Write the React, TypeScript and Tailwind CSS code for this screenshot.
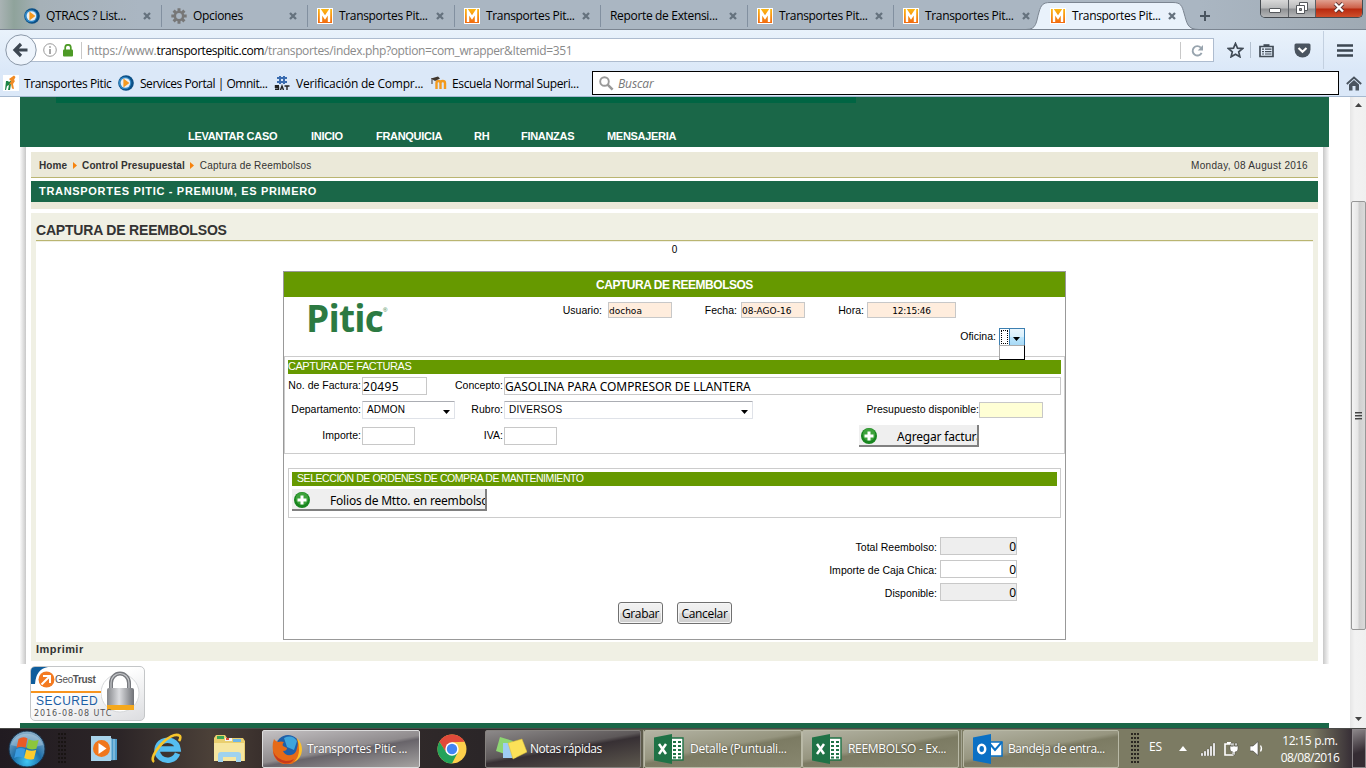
import React from "react";

const ui = "font-['Open_Sans','Noto_Sans',sans-serif]";

function QtracsIcon() {
  return (
    <svg width="16" height="16" viewBox="0 0 16 16" className="shrink-0">
      <circle cx="8" cy="8" r="7.8" fill="#0b4f86" />
      <circle cx="7" cy="8" r="6.3" fill="#2f86c4" />
      <circle cx="7.4" cy="8" r="4.8" fill="#e9f0f5" />
      <path d="M5.4 3.6 11.4 8l-6 4.4z" fill="#f59a1f" />
    </svg>
  );
}

function MIcon() {
  return (
    <svg width="16" height="16" viewBox="0 0 16 16" className="shrink-0">
      <defs>
        <linearGradient id="mg" x1="0" y1="0" x2="0" y2="1">
          <stop offset="0" stopColor="#fdb813" />
          <stop offset="1" stopColor="#f26a10" />
        </linearGradient>
      </defs>
      <rect width="16" height="16" fill="#fff" />
      <rect x="1" y="1" width="14" height="14" fill="url(#mg)" />
      <path d="M4 14V3.500l4 6 4-6V14" fill="none" stroke="#fff" strokeWidth="2.400" />
    </svg>
  );
}

function GearIcon() {
  return (
    <svg width="16" height="16" viewBox="0 0 16 16" className="shrink-0">
      <g stroke="#777" strokeWidth="3">
        <path d="M8 .3v15.4M.3 8h15.4M2.6 2.6l10.8 10.8M13.4 2.6 2.6 13.4" />
      </g>
      <circle cx="8" cy="8" r="5.3" fill="#777" />
      <circle cx="8" cy="8" r="2.9" fill="#aab6c2" />
    </svg>
  );
}

function CloseX() {
  return (
    <svg width="8" height="8" viewBox="0 0 8 8" className="shrink-0">
      <path d="M1 1l6 6M7 1 1 7" stroke="#65727e" strokeWidth="2.3" />
    </svg>
  );
}

type TabProps = { icon?: React.ReactNode; title: string; width: string; sep?: boolean; pad?: string };

function Tab({ icon, title, width, sep = true, pad = "pl-[9px]" }: TabProps) {
  return (
    <div className={`flex h-[29px] shrink-0 items-center pt-[2px] ${width}`}>
      <div className={`flex flex-1 items-center gap-[6px] ${pad}`}>
        {icon}
        <span className="whitespace-nowrap text-[12px] leading-4 tracking-[-0.33px]">{title}</span>
      </div>
      <CloseX />
      <div className={`ml-[10px] h-[22px] w-px ${sep ? "bg-[#8290a0]" : "bg-transparent"}`} />
    </div>
  );
}

function TabStrip() {
  return (
    <div className="relative flex h-[30px] items-start overflow-hidden border-b border-[#7b8591] bg-[linear-gradient(90deg,#a9b3b4_0px,#8fa39b_14px,#a6b1b8_40px,#aab6c2_140px,#aab6c2_1200px,#9faab4_1366px)] pl-[15px]">
      <Tab icon={<QtracsIcon />} title="QTRACS ? List..." width="w-[147px]" />
      <Tab icon={<GearIcon />} title="Opciones" width="w-[146px]" />
      <Tab icon={<MIcon />} title="Transportes Pit..." width="w-[147px]" />
      <Tab icon={<MIcon />} title="Transportes Pit..." width="w-[146px]" />
      <Tab title="Reporte de Extensi..." width="w-[147px]" />
      <Tab icon={<MIcon />} title="Transportes Pit..." width="w-[146px]" />
      <Tab icon={<MIcon />} title="Transportes Pit..." width="w-[147px]" sep={false} />
      <div className="relative flex w-[146px] shrink-0">
        <svg width="176" height="31" viewBox="0 0 176 31" className="absolute left-[-15px] top-0">
          <path d="M0 29.500C11 29.500 10 22 13 12 15 5 17 2.500 24 2.500H147C155 2.500 156 6 158 13 161 23 161 29.500 173 29.500Z" fill="#e9f2fb" stroke="#7b8591" strokeWidth="1" />
          <path d="M4 30H170" stroke="#e9f2fb" strokeWidth="2" />
        </svg>
        <div className="relative w-[146px]">
          <Tab icon={<MIcon />} title="Transportes Pit..." width="w-[146px]" sep={false} />
        </div>
      </div>
      <svg width="12" height="12" viewBox="0 0 12 12" className="ml-[12px] mt-[10px]">
        <path d="M6 1v10M1 6h10" stroke="#4a5560" strokeWidth="2" />
      </svg>
      <div className="absolute left-[1260px] top-0 flex h-[18px] w-[103px] overflow-hidden rounded-b-[5px] border border-t-0 border-[#454a50]">
        <div className="flex w-[28px] items-center justify-center border-r border-[#5b5f64] bg-[linear-gradient(180deg,#d8d8d8_0px,#b9babb_8px,#8f9194_9px,#b5b6b8_17px)]">
          <div className="mt-[3px] h-[5px] w-[12px] rounded-[1px] border border-[#55585c] bg-white" />
        </div>
        <div className="flex w-[27px] items-center justify-center border-r border-[#5b5f64] bg-[linear-gradient(180deg,#d8d8d8_0px,#b9babb_8px,#8f9194_9px,#b5b6b8_17px)]">
          <svg width="12" height="12" viewBox="0 0 12 12" className="mb-px">
            <path d="M3.500 .5h8v8h-8z" fill="#fff" stroke="#55585c" />
            <path d="M.5 3.500h8v8h-8z" fill="#fff" stroke="#55585c" />
            <path d="M3.500 6.500h2v2h-2z" fill="#999" stroke="#55585c" />
          </svg>
        </div>
        <div className="flex flex-1 items-center justify-center bg-[linear-gradient(180deg,#e0a090_0px,#cd5f48_8px,#b8290f_9px,#cf4f2c_17px)]">
          <svg width="12" height="11" viewBox="0 0 12 11" className="mb-[2px]">
            <path d="M2 1.500l8 8M10 1.500l-8 8" stroke="#5b3434" strokeWidth="4" />
            <path d="M2 1.500l8 8M10 1.500l-8 8" stroke="#fff" strokeWidth="2.400" />
          </svg>
        </div>
      </div>
    </div>
  );
}

function NavBar() {
  return (
    <div className="flex h-[40px] items-center bg-[linear-gradient(180deg,#e9f2fb,#dbe8f8)]">
      <div className="relative flex h-[32px] w-[1214px] items-center pl-[16px]">
        <div className="flex h-[24px] flex-1 items-center border border-[#aebccf] bg-white">
          <svg width="14" height="14" viewBox="0 0 14 14" className="ml-[26px]">
            <circle cx="7" cy="7" r="6.300" fill="none" stroke="#9a9a9a" />
            <path d="M7 3.200v1.500M7 6v5" stroke="#8a8a8a" strokeWidth="1.500" />
          </svg>
          <svg width="10" height="13" viewBox="0 0 10 13" className="ml-[6px]">
            <path d="M2.200 6V3.600a2.800 2.800 0 0 1 5.600 0V6" fill="none" stroke="#4d9a26" strokeWidth="1.700" />
            <rect y="5.500" width="10" height="7" rx="1" fill="#4d9a26" />
          </svg>
          <div className="ml-[8px] mr-[5px] h-[17px] w-px bg-[#c8c8c8]" />
          <span className="whitespace-nowrap pt-[2px] text-[12px] tracking-[-0.2px] text-[#8a8a8a]">
            https://www.<span className="tracking-[-0.42px] text-black">transportespitic.com</span><span className="tracking-[-0.36px]">/transportes/index.php?option=com_wrapper&amp;Itemid=351</span>
          </span>
          <div className="ml-auto h-[17px] w-px bg-[#c8c8c8]" />
          <svg width="13" height="13" viewBox="0 0 13 13" className="ml-[10px] mr-[9px]">
            <path d="M9.800 3.600A4.700 4.700 0 1 0 10.600 8.800" fill="none" stroke="#98a4ae" strokeWidth="1.900" />
            <path d="M12 1v5.500H6.700z" fill="#98a4ae" />
          </svg>
        </div>
        <svg width="32" height="32" viewBox="0 0 32 32" className="absolute left-[5px] top-0">
          <circle cx="16" cy="16" r="15.200" fill="#edf4fc" stroke="#8b98a8" />
          <path d="M16 10 10 16l6 6M10.500 16H22.500" fill="none" stroke="#3d4752" strokeWidth="3.200" />
        </svg>
      </div>
      <svg width="17" height="16" viewBox="0 0 17 16" className="ml-[13px]">
        <path d="M8.500 1.500l2 4.700 5 .4-3.800 3.300 1.200 4.900-4.400-2.600-4.400 2.600 1.200-4.900L1.500 6.600l5-.4z" fill="none" stroke="#414b56" strokeWidth="1.700" />
      </svg>
      <div className="ml-[6px] h-[16px] w-px bg-[#b3c0cf]" />
      <svg width="15" height="15" viewBox="0 0 15 15" className="ml-[8px]">
        <path d="M1 3.500h13v10H1z" fill="none" stroke="#414b56" strokeWidth="1.700" />
        <path d="M4.500 4V1.200h6V4z" fill="#414b56" />
        <path d="M3 6.200h2M6 6.200h6.500M3 8.600h2M6 8.600h6.500M3 11h2M6 11h6.500" stroke="#414b56" strokeWidth="1.200" />
      </svg>
      <svg width="17" height="15" viewBox="0 0 17 15" className="ml-[20px]">
        <path d="M2 .5h13q1.500 0 1.500 1.500v4.500a8 8 0 0 1-16 0V2Q.5.500 2 .5z" fill="#4a545f" />
        <path d="M4.500 5l4 3.800 4-3.800" fill="none" stroke="#fff" strokeWidth="2.200" />
      </svg>
      <div className="ml-[12px] h-[38px] w-px bg-[#c3d0e0]" />
      <svg width="16" height="13" viewBox="0 0 16 13" className="ml-[13px]">
        <path d="M0 1.500h16M0 6.500h16M0 11.500h16" stroke="#3d4752" strokeWidth="2.600" />
      </svg>
    </div>
  );
}

function BookmarksBar() {
  return (
    <div className="flex h-[27px] items-center border-b border-[#a6b9d0] bg-[#dbe8f8] text-[12px] text-black">
      <svg width="16" height="16" viewBox="0 0 16 16" className="ml-[3px]">
        <rect width="16" height="16" fill="#fff" />
        <path d="M3 6h2l1 1 4-3-2 5-1 6H5l1-5-2 1-1 4H2z" fill="#1c8447" />
        <path d="M6 4l5-3.500L12.500 2 11 5l1 1-2 3 1 5-2-.5L8 9l-2 1 2-4z" fill="#f08a24" />
      </svg>
      <span className="ml-[5px] w-[88px] whitespace-nowrap pt-[2px] tracking-[-0.38px]">Transportes Pitic</span>
      <div className="ml-[6px]"><QtracsIcon /></div>
      <span className="ml-[6px] w-[128px] whitespace-nowrap pt-[2px] tracking-[-0.46px]">Services Portal | Omnit...</span>
      <svg width="16" height="14" viewBox="0 0 16 14" className="ml-[6px]">
        <path d="M6 0v8M10 0v8M3 2h10M3 6h10" stroke="#3a6cb0" strokeWidth="2" />
        <path d="M5 9.800H1.500v1.500H4.500V13.200H1M6.500 14l1.500-4 1.500 4M10.500 10h5M13 10v4" stroke="#222" strokeWidth="1.400" fill="none" />
      </svg>
      <span className="ml-[6px] w-[128px] whitespace-nowrap pt-[2px] tracking-[-0.22px]">Verificación de Compr...</span>
      <svg width="16" height="16" viewBox="0 0 16 16" className="ml-[7px]">
        <path d="M5.500 14V8q0-2 2-2t2 2v6M9.500 14V8q0-2 2.200-2T14 8v6" fill="none" stroke="#f39a1d" strokeWidth="2.400" />
        <path d="M0 3.500l7-2L9 3.500 4 6z" fill="#40372e" />
        <path d="M1 3v6" stroke="#40372e" />
      </svg>
      <span className="ml-[5px] w-[129px] whitespace-nowrap pt-[2px] tracking-[-0.37px]">Escuela Normal Superi...</span>
      <div className="ml-[11px] flex h-[24px] w-[747px] shrink-0 items-center border border-black bg-white">
        <svg width="15" height="15" viewBox="0 0 15 15" className="ml-[6px]">
          <circle cx="5.500" cy="5.500" r="4.300" fill="none" stroke="#999" strokeWidth="1.900" />
          <path d="M8.600 8.600l5 5" stroke="#999" strokeWidth="2.600" />
        </svg>
        <span className="ml-[4px] pt-[2px] text-[12px] italic tracking-[-0.1px] text-[#777]">Buscar</span>
      </div>
      <svg width="16" height="15" viewBox="0 0 16 15" className="ml-[7px]">
        <path d="M.8 8 8 1.500 15.200 8" fill="none" stroke="#4a545f" strokeWidth="1.800" />
        <path d="M3 8.500 8 4l5 4.500V14.500H9.500V10h-3v4.500H3z" fill="#4a545f" />
      </svg>
    </div>
  );
}

function Field({ className = "", children }: { className?: string; children?: React.ReactNode }) {
  return <div className={`shrink-0 overflow-hidden whitespace-nowrap border border-[#c8c8c8] ${className}`}>{children}</div>;
}

function Label({ width, children }: { width: string; children: React.ReactNode }) {
  return <div className={`shrink-0 whitespace-nowrap text-right text-[10.5px] leading-[17px] tracking-[0.02px] ${width}`}>{children}</div>;
}

function Select({ width, value }: { width: string; value: string }) {
  return (
    <div className={`flex h-[18px] shrink-0 items-center justify-between rounded-[1px] border border-[#dfe2e8] border-t-[#abadb3] bg-white pl-[4px] pr-[4px] ${width}`}>
      <span className="text-[10px] leading-[14px] tracking-[0.2px]">{value}</span>
      <svg width="7" height="4" viewBox="0 0 7 4" className="mt-[3px]"><path d="M0 0h7L3.500 4z" fill="#000" /></svg>
    </div>
  );
}

function PlusIcon() {
  return (
    <svg width="18" height="18" viewBox="0 0 18 18" className="shrink-0">
      <circle cx="9" cy="9" r="8" fill="#18861f" />
      <circle cx="9" cy="7.500" r="6.300" fill="#3da23b" />
      <path d="M9 4.500v9M4.500 9h9" stroke="#fff" strokeWidth="3" />
    </svg>
  );
}

function ActionButton({ width, children }: { width: string; children: React.ReactNode }) {
  return (
    <div className={`flex h-[22px] shrink-0 items-center overflow-hidden border-b-2 border-r-2 border-[#808080] bg-[#efefef] pl-px pt-[2px] ${width}`}>
      <PlusIcon />
      <span className="ml-[19px] whitespace-nowrap pt-px font-['Noto_Sans',sans-serif] text-[12px] leading-[17px] tracking-[-0.19px]">{children}</span>
    </div>
  );
}

function TotalRow({ label, grey = false }: { label: string; grey?: boolean }) {
  return (
    <div className="flex h-[18px] items-center justify-end gap-[3px]">
      <div className="pt-[2px]"><Label width="w-[120px]">{label}</Label></div>
      <Field className={`h-[18px] w-[77px] text-right font-['Noto_Sans',sans-serif] text-[12px] leading-[17px] ${grey ? "bg-[#eee]" : "bg-white"}`}>0</Field>
    </div>
  );
}

function FormButton({ width, children }: { width: string; children: string }) {
  return (
    <button className={`h-[22px] whitespace-nowrap rounded-[3px] border border-[#707070] bg-[linear-gradient(180deg,#f2f2f2_0%,#ebebeb_49%,#dddddd_50%,#cfcfcf_100%)] pt-px text-[12px] leading-[20px] tracking-[-0.35px] shadow-[inset_0_0_0_1px_#f6f6f6] ${ui} ${width}`}>{children}</button>
  );
}

function ReembolsoForm() {
  const small = "h-[16px] font-['DejaVu_Sans',sans-serif] text-[9px] leading-[16px] bg-[#ffeddd]";
  return (
    <div className="ml-[247px] mt-[13px] h-[369px] w-[783px] border border-[#999] bg-white text-black">
      <div className="h-[25px] bg-[#669900] text-center text-[12px] font-bold leading-[26px] tracking-[-0.48px] text-white">CAPTURA DE REEMBOLSOS</div>
      <div className="flex h-[59px]">
        <div className="flex w-[160px] pl-[22px]">
          <span className="font-['Open_Sans',sans-serif] text-[37px] font-bold leading-[42px] tracking-[-0.8px] text-[#2c7a42]">Pitic</span>
          <span className="mt-[9px] text-[6px] leading-[8px] text-[#2c7a42]">®</span>
        </div>
        <div className="flex-1">
          <div className="flex pt-[5px]">
            <Label width="w-[158px]">Usuario:</Label>
            <Field className={`ml-[6px] w-[64px] ${small}`}>dochoa</Field>
            <Label width="w-[65px]">Fecha:</Label>
            <Field className={`ml-[4px] w-[64px] ${small} tracking-[0px]`}>08-AGO-16</Field>
            <Label width="w-[59px]">Hora:</Label>
            <Field className={`ml-[3px] w-[89px] text-center ${small} tracking-[-0.25px]`}>12:15:46</Field>
          </div>
          <div className="flex pt-[9px]">
            <Label width="w-[552px]">Oficina:</Label>
            <div className="relative ml-[3px] flex h-[18px] w-[26px] border border-[#3c7fb1] bg-white">
              <div className="m-px w-[7px] border border-dotted border-black" />
              <div className="flex flex-1 items-center justify-center border-l border-[#3c7fb1] bg-[linear-gradient(180deg,#eaf6fd_0%,#d9f0fc_49%,#bee6fd_50%,#a7d9f5_100%)]">
                <svg width="7" height="4" viewBox="0 0 7 4" className="mr-px mt-[3px]"><path d="M0 0h7L3.500 4z" fill="#000" /></svg>
              </div>
              <div className="absolute left-[-1px] top-[16px] h-[15px] w-[26px] border border-black border-l-[#aaa] border-t-[#aaa] bg-white" />
            </div>
          </div>
        </div>
      </div>

      <section className="h-[98px] border border-[#ccc] px-[3px] pt-[3px]">
        <div className="h-[14px] bg-[#669900] text-[11px] leading-[13px] tracking-[-0.46px] text-white">CAPTURA DE FACTURAS</div>
        <div className="mt-[3px] flex">
          <Label width="w-[73px]">No. de Factura:</Label>
          <Field className="ml-px h-[18px] w-[65px] bg-white font-['Noto_Sans',sans-serif] text-[12px] leading-[18px] tracking-[0.3px]">20495</Field>
          <Label width="w-[76px]">Concepto:</Label>
          <Field className="ml-px h-[18px] w-[557px] bg-white font-['Noto_Sans',sans-serif] text-[12px] leading-[18px] tracking-[-0.04px]">GASOLINA PARA COMPRESOR DE LLANTERA</Field>
        </div>
        <div className="mt-[6px] flex">
          <Label width="w-[73px]">Departamento:</Label>
          <div className="ml-px"><Select width="w-[93px]" value="ADMON" /></div>
          <Label width="w-[48px]">Rubro:</Label>
          <div className="ml-px"><Select width="w-[249px]" value="DIVERSOS" /></div>
          <Label width="w-[226px]">Presupuesto disponible:</Label>
          <Field className="mt-px h-[16px] w-[64px] bg-[#ffffd5]" />
        </div>
        <div className="mt-[6px] flex items-start">
          <div className="pt-[2px]"><Label width="w-[73px]">Importe:</Label></div>
          <Field className="ml-px mt-[2px] h-[18px] w-[53px] bg-white" />
          <div className="pt-[2px]"><Label width="w-[88px]">IVA:</Label></div>
          <Field className="ml-px mt-[2px] h-[18px] w-[53px] bg-white" />
          <div className="ml-[302px]"><ActionButton width="w-[120px]">Agregar factura</ActionButton></div>
        </div>
      </section>

      <section className="ml-[4px] mt-[14px] h-[50px] w-[773px] border border-[#ccc] p-[3px]">
        <div className="h-[14px] bg-[#669900] pl-[5px] text-[10.5px] leading-[13px] tracking-[-0.44px] text-white">SELECCIÓN DE ORDENES DE COMPRA DE MANTENIMIENTO</div>
        <div className="mt-[3px]"><ActionButton width="w-[195px]">Folios de Mtto. en reembolso</ActionButton></div>
      </section>

      <div className="mr-[48px] mt-[19px] flex flex-col gap-[5px]">
        <TotalRow label="Total Reembolso:" grey />
        <TotalRow label="Importe de Caja Chica:" />
        <TotalRow label="Disponible:" grey />
      </div>
      <div className="mt-px flex gap-[14px] pl-[334px]">
        <FormButton width="w-[45px]">Grabar</FormButton>
        <FormButton width="w-[55px]">Cancelar</FormButton>
      </div>
    </div>
  );
}

function Crumb() {
  return <svg width="4" height="7" viewBox="0 0 4 7" className="mx-[5.5px]"><path d="M0 0l4 3.500L0 7z" fill="#f7830d" /></svg>;
}

function GeoTrust() {
  return (
    <div className="ml-[10px] mt-[2px] flex h-[55px] w-[115px] overflow-hidden rounded-[5px] border border-[#c4c6c8] bg-[linear-gradient(160deg,#ffffff_40%,#dcdde0_100%)]">
      <div className="relative z-10 flex w-[70px] shrink-0 flex-col">
        <div className="flex h-[24px] items-center">
          <svg width="24" height="24" viewBox="0 0 24 24" className="shrink-0">
            <path d="M0 0h17Q5 2 4 17H0z" fill="#0f5d9c" />
            <circle cx="15.500" cy="12.500" r="8" fill="#f47a20" />
            <path d="M12 9h7v7M18.500 9.500l-8 8" fill="none" stroke="#fff" strokeWidth="2" />
          </svg>
          <span className="whitespace-nowrap text-[10px] tracking-[-0.35px] text-[#555]">Geo<b>Trust</b></span>
        </div>
        <div className="h-[2px] w-[70px] bg-[#f7941e]" />
        <div className="pl-[5px] pt-px text-[12px] leading-[15px] tracking-[0.5px] text-[#1c5fa5]">SECURED</div>
        <div className="whitespace-nowrap pl-[3px] font-['DejaVu_Sans',sans-serif] text-[8px] leading-[10px] tracking-[0.95px] text-[#555]">2016-08-08 UTC</div>
      </div>
      <svg width="42" height="53" viewBox="0 0 42 53" className="shrink-0">
        <defs>
          <linearGradient id="lk" x1="0" x2="1"><stop offset="0" stopColor="#85878b" /><stop offset=".45" stopColor="#dcdde0" /><stop offset="1" stopColor="#6f7176" /></linearGradient>
        </defs>
        <circle cx="19" cy="26" r="19" fill="#fff" stroke="#d5d7d9" />
        <path d="M10 23V16a9 9.500 0 0 1 18 0v7" fill="none" stroke="#77797e" strokeWidth="4" />
        <path d="M10 23V16a9 9.500 0 0 1 18 0v7" fill="none" stroke="#c6c8cb" strokeWidth="1.200" />
        <rect x="6" y="21" width="27" height="22" rx="2" fill="url(#lk)" />
        <rect x="6" y="38" width="27" height="5" fill="#f5a81c" />
      </svg>
    </div>
  );
}

const menu: [string, string][] = [
  ["LEVANTAR CASO", "w-[123px]"],
  ["INICIO", "w-[65px]"],
  ["FRANQUICIA", "w-[98px]"],
  ["RH", "w-[47px]"],
  ["FINANZAS", "w-[86px]"],
  ["MENSAJERIA", "w-[80px]"],
];

function Page() {
  return (
    <div className="flex h-[631px] overflow-hidden bg-white font-['Liberation_Sans',Arial,sans-serif]">
      <div className="ml-[20px] flex w-[1309px] flex-col">
        <header className="h-[50px] shrink-0 bg-[#1a6748]">
          <div className="ml-[36px] h-[6px] w-[800px] bg-[#006543]" />
          <nav className="flex pl-[168px] pt-[26px] text-[11px] font-bold leading-[14px] tracking-[-0.3px] text-white">
            {menu.map(([t, w]) => <span key={t} className={`whitespace-nowrap ${w}`}>{t}</span>)}
          </nav>
        </header>
        <div className="flex h-[517px] shrink-0">
          <div className="w-[6px] bg-[linear-gradient(90deg,#fafafa,#c8c8c8)]" />
          <div className="flex-1 px-[5px] pt-[5px]">
            <div className="flex h-[26px] items-center border-b border-[#bab571] bg-[#ebe9d9] px-[8px] pt-px text-[10px] text-[#333]">
              <b className="tracking-[0.08px]">Home</b><Crumb />
              <b className="tracking-[0.08px]">Control Presupuestal</b><Crumb />
              <span className="tracking-[0.18px]">Captura de Reembolsos</span>
              <span className="ml-auto mr-[2px] tracking-[0.32px]">Monday, 08 August 2016</span>
            </div>
            <div className="mt-[3px] h-[28px] border-b-[7px] border-[#ebe9d9] bg-[#1a6748] pl-[8px] text-[11px] font-bold leading-[20px] tracking-[0.69px] text-white">TRANSPORTES PITIC - PREMIUM, ES PRIMERO</div>
            <div className="mt-[4px] h-[448px] bg-[#f0f0e4] px-[5px]">
              <h1 className="h-[28px] border-b border-[#bab571] pt-[8px] text-[14px] font-bold leading-[18px] tracking-[-0.19px] text-[#333]">CAPTURA DE REEMBOLSOS</h1>
              <div className="mt-px h-[400px] bg-white">
                <div className="h-[16px] pt-[1px] text-center text-[10px] leading-[13px] text-black">0</div>
                <ReembolsoForm />
              </div>
              <div className="text-[11px] font-bold leading-[15px] tracking-[0.45px] text-[#333]">Imprimir</div>
            </div>
          </div>
          <div className="w-[6px] bg-[linear-gradient(90deg,#c8c8c8,#fafafa)]" />
        </div>
        <div className="shrink-0"><GeoTrust /></div>
        <div className="mt-[2px] h-[5px] shrink-0 bg-[#1a6748]" />
      </div>
      <div className="ml-auto flex w-[16px] flex-col items-center bg-[linear-gradient(90deg,#e6e6e6,#f2f2f2_30%,#f0f0f0)]">
        <svg width="7" height="4" viewBox="0 0 7 4" className="mt-[6px]"><path d="M0 4h7L3.500 0z" fill="#444" /></svg>
        <div className="mt-[94px] flex h-[429px] w-[15px] flex-col items-center justify-center gap-px rounded-[2px] border border-[#979797] bg-[linear-gradient(90deg,#f4f4f4_0%,#e6e6e6_45%,#cfcfcf_55%,#dadada_100%)]">
          <div className="h-[2px] w-[7px] border-t border-[#444] bg-[#999]" />
          <div className="h-[2px] w-[7px] border-t border-[#444] bg-[#999]" />
          <div className="h-[2px] w-[7px] border-t border-[#444] bg-[#999]" />
        </div>
        <svg width="7" height="4" viewBox="0 0 7 4" className="mb-[7px] mt-auto"><path d="M0 0h7L3.500 4z" fill="#444" /></svg>
      </div>
    </div>
  );
}

function Grip() {
  return <div className="h-[32px] w-[9px] bg-[radial-gradient(circle_at_1px_1px,#15110f_1px,transparent_1.300px)] bg-[size:3px_4px] opacity-80" />;
}

function StartOrb() {
  return (
    <svg width="38" height="38" viewBox="0 0 38 38" className="ml-[8px]">
      <defs>
        <radialGradient id="orb" cx=".5" cy=".85" r=".85">
          <stop offset="0" stopColor="#3fc7f5" /><stop offset=".45" stopColor="#1d6ea8" /><stop offset="1" stopColor="#8fb2cb" />
        </radialGradient>
      </defs>
      <circle cx="19" cy="19" r="18" fill="url(#orb)" stroke="#16324c" />
      <path d="M3 15a16.500 15 0 0 1 32 0q-16 5-32 0z" fill="#fff" opacity=".25" />
      <path d="M10.500 9q4.500-3 9-.5l-2 9.300q-4.500-2.300-9 .2z" fill="#ea5b26" />
      <path d="M20.700 9.300q4.500 2.500 10 .5l-2.300 9q-5.500 1.500-9.800-.7z" fill="#8cc63c" />
      <path d="M8.200 19.300q4.500-2.500 9-.2l-2 8.700q-4.500-2.300-9 .1z" fill="#3a9be0" />
      <path d="M18.300 19.500q4.500 2.400 9.900.6l-2.300 8.800q-5.400 1.500-9.700-.9z" fill="#fccb2d" />
    </svg>
  );
}

function FirefoxIcon() {
  return (
    <svg width="30" height="30" viewBox="0 0 30 30" className="shrink-0">
      <circle cx="16" cy="13" r="12" fill="#1f5fa8" />
      <path d="M12 4q8-4 13 3l-3 9-7-3z" fill="#3fa5dc" />
      <path d="M2 5q1 2 4 3 3-1 6 0-2 2-1 4l4 2q0 3-4 3 2 5 8 4 5-1 6-7 2-6-1-10 5 5 5 12A14 14 0 0 1 1 17Q0 10 2 5z" fill="#e66a17" />
      <path d="M25 4q5 5 5 12a14 14 0 0 1-8 12q5-5 5-12 0-7-2-12z" fill="#fbc02c" />
      <path d="M1 17q3 8 13 10 5 0 8-2-3 5-9 4.500Q3 28 1 17z" fill="#c8391b" />
    </svg>
  );
}

function ChromeIcon() {
  return (
    <svg width="30" height="30" viewBox="0 0 30 30" className="shrink-0">
      <circle cx="15" cy="15" r="14.500" fill="#fdd04b" />
      <path d="M2.440 7.750A14.500 14.500 0 0 1 27.560 7.750L15 8.300 9.200 18.400z" fill="#e04a3a" />
      <path d="M2.440 7.750A14.500 14.500 0 0 0 15 29.500L20.800 18.350 9.200 18.350z" fill="#23a25a" />
      <circle cx="15" cy="15" r="6.700" fill="#fff" />
      <circle cx="15" cy="15" r="5.200" fill="#4285f4" />
    </svg>
  );
}

function NotesIcon() {
  return (
    <svg width="32" height="26" viewBox="0 0 32 26" className="shrink-0">
      <path d="M5 1l13 4-5 14-12-4z" fill="#8ed673" />
      <path d="M8 7h13v15H8z" fill="#9fccf3" />
      <path d="M13 7l14-4 5 13-14 7z" fill="#fbe158" stroke="#d7b936" strokeWidth=".5" />
    </svg>
  );
}

function ExcelIcon() {
  return (
    <svg width="30" height="30" viewBox="0 0 30 30" className="shrink-0">
      <path d="M16 4h13v22H16z" fill="#fff" stroke="#1f7246" strokeWidth="1.400" />
      <path d="M19 8h3M24 8h3M19 12h3M24 12h3M19 16h3M24 16h3M19 20h3M24 20h3M19 23.500h3M24 23.500h3" stroke="#1f7246" strokeWidth="2.200" />
      <path d="M0 3.500 18 0v30L0 26.500z" fill="#1f7246" />
      <path d="M5 10l7 10M12 10 5 20" stroke="#fff" strokeWidth="2.500" />
    </svg>
  );
}

function OutlookIcon() {
  return (
    <svg width="30" height="30" viewBox="0 0 30 30" className="shrink-0">
      <path d="M16 8h13v14H16z" fill="#fff" stroke="#0a70c4" strokeWidth="1.500" />
      <path d="M17 10l5 6 7-8" fill="none" stroke="#0a70c4" strokeWidth="2" />
      <path d="M0 3.500 18 0v30L0 26.500z" fill="#0a70c4" />
      <ellipse cx="8.700" cy="15" rx="3.500" ry="4.300" fill="none" stroke="#fff" strokeWidth="2.500" />
    </svg>
  );
}

function TaskButton({ icon, title, className }: { icon: React.ReactNode; title: string; className: string }) {
  return (
    <div className={`flex h-[38px] shrink-0 items-center rounded-[2px] border pl-[9px] text-[12px] text-white ${className}`}>
      {icon}
      <span className="whitespace-nowrap [text-shadow:0_0_2px_rgba(0,0,0,0.5)]">{title}</span>
    </div>
  );
}

function Taskbar() {
  const olive = "border-[#b9b9a6] bg-[linear-gradient(170deg,#b4b4a4_0%,#96957f_45%,#7c7b63_52%,#88876f_100%)]";
  return (
    <div className="flex h-[40px] items-center border-t border-[#4a4a48] bg-[linear-gradient(90deg,#211b21_0px,#2c2527_120px,#4b4038_210px,#3a302d_260px,#2b2628_480px,#5e5c4b_645px,#7c7b63_760px,#7c7b63_1310px,#3a3238_1350px)] text-white">
      <StartOrb />
      <div className="ml-[12px] w-[9px]"><Grip /></div>
      <svg width="27" height="26" viewBox="0 0 27 26" className="ml-[24px]">
        <path d="M4 2l22 1v21L4 25z" fill="#4d9ccb" />
        <path d="M23 3v21M20 2v22" stroke="#a8d3ea" />
        <path d="M0 0h20v25H0z" fill="#a8d3ea" />
        <circle cx="10.500" cy="12.500" r="8.500" fill="#f0771c" />
        <path d="M7.500 7l8 5.500-8 5.500z" fill="#fff" />
      </svg>
      <svg width="32" height="31" viewBox="0 0 32 31" className="ml-[33px]">
        <path d="M26.500 20.500A10.500 10 0 1 1 27 16H9" fill="none" stroke="#55bdf0" strokeWidth="5.500" />
        <path d="M3 29C-4 24 20-4 29 3q1 2-1 5" fill="none" stroke="#f6c52c" strokeWidth="2.600" />
      </svg>
      <svg width="32" height="29" viewBox="0 0 32 29" className="ml-[30px]">
        <path d="M1 4l2-3h9l2 3h16l2 3v20H1z" fill="#e9cf6f" />
        <path d="M4 2h7v3H4z" fill="#3aa655" /><path d="M12 4h7v3h-7z" fill="#f3f3f3" /><path d="M13 4h3v2h-3z" fill="#d94b3a" /><path d="M20 5h8v3h-8z" fill="#6fb7e6" />
        <path d="M1 9h30v18H1z" fill="#f6e6a0" />
        <path d="M5 28v-7q0-3 3-3h17q3 0 3 3v7h-5v-5H10v5z" fill="#9fd2ee" />
      </svg>
      <TaskButton icon={<FirefoxIcon />} title="Transportes Pitic ..." className="ml-[17px] w-[158px] gap-[5px] tracking-[-0.3px] border-[#dcdcdc] bg-[linear-gradient(170deg,#c4c1c3_0%,#8f8b8d_50%,#68646a_56%,#a5a3a1_100%)]" />
      <div className="ml-[17px]"><ChromeIcon /></div>
      <TaskButton icon={<NotesIcon />} title="Notas rápidas" className="ml-[18px] w-[156px] gap-[3px] tracking-[-0.45px] border-[#85817e] bg-[linear-gradient(170deg,#8c8989_0%,#5d5859_45%,#373034_52%,#5d584e_100%)]" />
      <div className="h-[38px] w-[3px] border-r border-[#a3a391]" />
      <TaskButton icon={<ExcelIcon />} title="Detalle (Puntuali..." className={`w-[158px] gap-[6px] tracking-[-0.25px] ${olive}`} />
      <TaskButton icon={<ExcelIcon />} title="REEMBOLSO - Ex..." className={`w-[157px] gap-[6px] tracking-[-0.3px] ${olive}`} />
      <div className="mr-px h-[38px] w-[3px] border-r border-[#a3a391]" />
      <TaskButton icon={<OutlookIcon />} title="Bandeja de entra..." className={`w-[156px] gap-[5px] tracking-[-0.45px] ${olive}`} />
      <div className="ml-[12px] w-[9px]"><Grip /></div>
      <span className="mb-[4px] ml-[9px] w-[16px] text-[12px] tracking-[-0.2px]">ES</span>
      <svg width="8" height="5" viewBox="0 0 8 5" className="ml-[14px]"><path d="M0 5h8L4 0z" fill="#fff" /></svg>
      <svg width="17" height="14" viewBox="0 0 17 14" className="ml-[13px]">
        <path d="M1 11h2v3H1zM4 9h2v5H4zM7 7h2v7H7zM10 4h2v10h-2zM13 1h2v13h-2z" fill="#fff" stroke="#444" strokeWidth=".3" />
      </svg>
      <svg width="15" height="16" viewBox="0 0 15 16" className="ml-[7px]">
        <path d="M1 3h8v11H1z" fill="none" stroke="#fff" strokeWidth="1.600" /><path d="M3 1h4v2H3z" fill="#fff" />
        <path d="M6 5h8v3q0 3-3 3v3H9v-3q-3 0-3-3zM7 2h2v3H7zM11 2h2v3h-2z" fill="#fff" stroke="#55544a" strokeWidth=".6" />
      </svg>
      <svg width="14" height="15" viewBox="0 0 14 15" className="ml-[11px]">
        <path d="M0 5h3l5-4.500v14L3 10H0z" fill="#fff" stroke="#444" strokeWidth=".6" /><path d="M10.500 4.500q2 3 0 6" fill="none" stroke="#fff" strokeWidth="1.300" />
      </svg>
      <div className="ml-[16px] w-[60px] whitespace-nowrap text-center text-[12px] leading-[17px] tracking-[-0.3px]">
        <div>12:15 p.m.</div>
        <div className="tracking-[-0.5px]">08/08/2016</div>
      </div>
      <div className="ml-auto h-[39px] w-[14px] shrink-0 border border-[#8a8488] bg-[linear-gradient(160deg,#8b8689,#352c33_60%)]" />
    </div>
  );
}

export default function App() {
  return (
    <div className={`flex h-[768px] w-[1366px] flex-col overflow-hidden ${ui}`}>
      <TabStrip />
      <NavBar />
      <BookmarksBar />
      <Page />
      <Taskbar />
    </div>
  );
}
